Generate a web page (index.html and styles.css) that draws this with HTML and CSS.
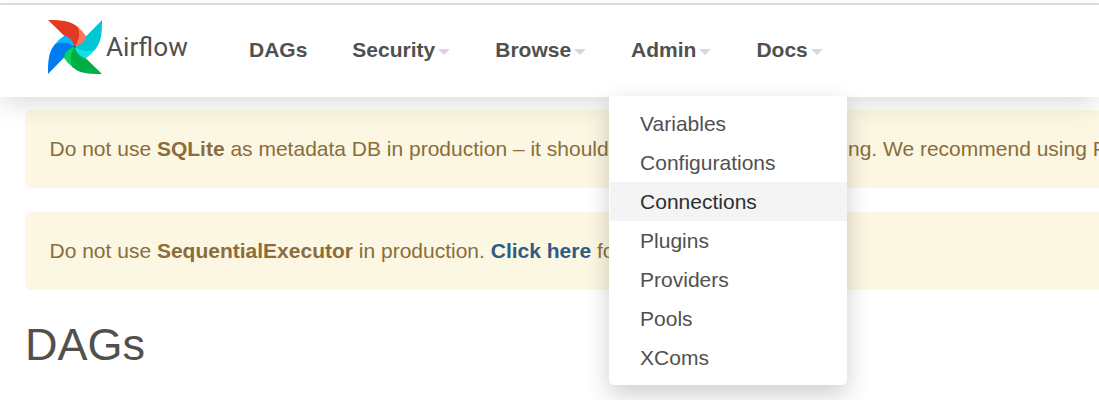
FILE: index.html
```html
<!DOCTYPE html>
<html lang="en">
<head>
<meta charset="utf-8">
<title>DAGs - Airflow</title>
<link rel="stylesheet" href="styles.css">
</head>
<body>
<header class="navbar">
  <a class="brand">
    <svg class="pinwheel" viewBox="0 0 160 160" aria-hidden="true">
      <path fill="#ff7557" d="M86 19Q102 31 113 48Q112 75 79 79Z"/>
      <path fill="#11e1ee" d="M141 86Q129 102 112 113Q83 112 79 79Z"/>
      <path fill="#04d659" d="M74 141Q58 129 47 112Q46 83 79 79Z"/>
      <path fill="#0cb6ff" d="M19 74Q31 58 48 47Q75 46 79 79Z"/>
      <path fill="#e43921" d="M0 0C45 0 68 3 88 21C97 45 90 62 79 79C73 61 66 51 48 47Z"/>
      <path fill="#00c7d4" d="M160 0C160 45 157 68 139 88C115 97 98 90 79 79C97 73 109 66 113 48Z"/>
      <path fill="#00ad46" d="M160 160C115 160 92 157 72 139C63 115 68 98 79 79C85 97 94 109 112 113Z"/>
      <path fill="#017cee" d="M0 160C0 115 3 92 21 72C45 63 62 68 79 79C61 85 51 94 47 112Z"/>
      <circle cx="79" cy="79" r="3.5" fill="#51504f"/>
    </svg>
    <span class="brand-name">Airflow</span>
  </a>
  <nav class="nav">
    <a class="nav-item">DAGs</a>
    <a class="nav-item">Security<i class="caret"></i></a>
    <a class="nav-item">Browse<i class="caret"></i></a>
    <div class="nav-item dropdown">Admin<i class="caret"></i>
      <div class="menu">
        <a class="menu-item">Variables</a>
        <a class="menu-item">Configurations</a>
        <a class="menu-item active">Connections</a>
        <a class="menu-item">Plugins</a>
        <a class="menu-item">Providers</a>
        <a class="menu-item">Pools</a>
        <a class="menu-item">XComs</a>
      </div>
    </div>
    <a class="nav-item">Docs<i class="caret"></i></a>
  </nav>
</header>
<main class="content">
  <div class="alert">Do not use <b>SQLite</b> as metadata DB in production – it should only be used for dev/testing. We recommend using Postgres or MySQL.</div>
  <div class="alert">Do not use <b>SequentialExecutor</b> in production. <a class="link">Click here</a> for more information.</div>
  <h2 class="title">DAGs</h2>
</main>
</body>
</html>
```
FILE: styles.css
```css
* { box-sizing: border-box; }
html { overflow: hidden; }
body {
  margin: 0;
  padding-top: 3px;
  height: 400px;
  overflow: hidden;
  background: #fff;
  color: #51504f;
  font: 21px/30px "Liberation Sans", Arial, sans-serif;
}
.navbar {
  position: relative;
  z-index: 1;
  display: flex;
  height: 94px;
  border-top: 2px solid #dcdcdc;
  background: #fff;
  box-shadow: 0 9px 24px -3px rgba(0, 0, 0, .15);
}
.brand {
  display: flex;
  width: 201px;
  padding: 15px 0 0 48px;
}
.pinwheel { width: 54px; height: 54px; }
.brand-name {
  margin: 12px 0 0 4px;
  font: 26.2px/30px Roboto, sans-serif;
}
.nav { display: flex; gap: 45px; padding-left: 48px; }
.nav-item {
  display: flex;
  align-items: center;
  height: 89px;
  font-weight: bold;
}
.caret {
  margin: 4px 0 0 3px;
  border: 6px solid transparent;
  border-top-color: #e0d0e0;
  border-bottom: 0;
}
.dropdown { position: relative; }
.menu {
  position: absolute;
  top: 91px;
  left: -22px;
  width: 238px;
  height: 289px;
  padding: 8px 0 8px 1px;
  border-radius: 0 0 5px 5px;
  background: #fff;
  box-shadow: 0 9px 24px rgba(0, 0, 0, .2);
  font-weight: normal;
}
.menu-item {
  display: block;
  height: 39px;
  padding-left: 30px;
  line-height: 39px;
}
.menu-item.active { background: #f4f4f4; color: #2f2f2f; }
.content { padding: 13px 0 0 25px; }
.alert {
  height: 78px;
  margin: 0 -25px 24px 0;
  padding: 24px 24.5px;
  border-radius: 6px;
  background: #fcf7e3;
  color: #8a6d3b;
  white-space: nowrap;
}
.link { color: #2f5b85; font-weight: bold; }
.title {
  margin: 0;
  font-size: 45px;
  font-weight: normal;
  line-height: 62px;
}
```
